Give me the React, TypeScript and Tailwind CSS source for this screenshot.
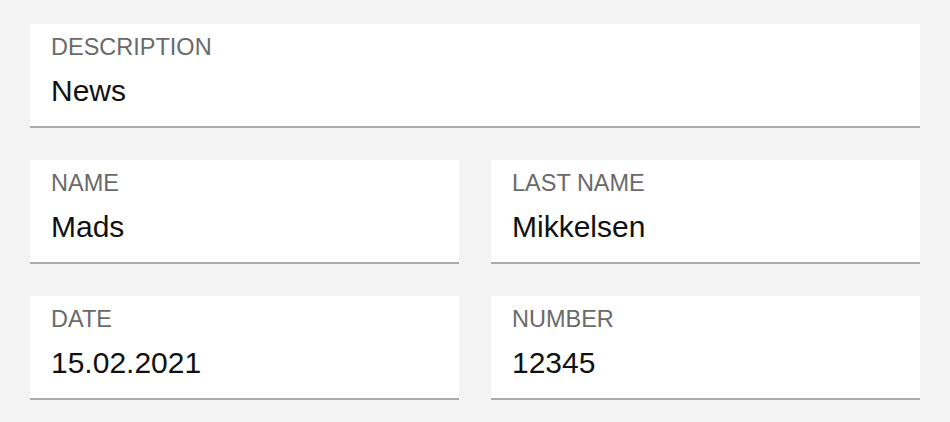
import React from 'react';

type FieldProps = {
  label: string;
  value: string;
};

function Field({ label, value }: FieldProps) {
  return (
    <div className="flex h-[104px] flex-col border-b-2 border-[#ababab] bg-white px-[21px] pt-[10px]">
      <span className="text-[23.5px] leading-[26px] text-[#6a6a6a]">{label}</span>
      <span className="mt-[14px] text-[30px] leading-[34px] text-[#111111]">{value}</span>
    </div>
  );
}

export default function App() {
  return (
    <div
      className="flex min-h-[422px] flex-col gap-8 bg-[#f3f3f3] px-[30px] pb-[22px] pt-6"
      style={{ fontFamily: '"Liberation Sans", Arial, sans-serif' }}
    >
      <Field label="DESCRIPTION" value="News" />
      <div className="grid grid-cols-2 gap-8">
        <Field label="NAME" value="Mads" />
        <Field label="LAST NAME" value="Mikkelsen" />
      </div>
      <div className="grid grid-cols-2 gap-8">
        <Field label="DATE" value="15.02.2021" />
        <Field label="NUMBER" value="12345" />
      </div>
    </div>
  );
}
